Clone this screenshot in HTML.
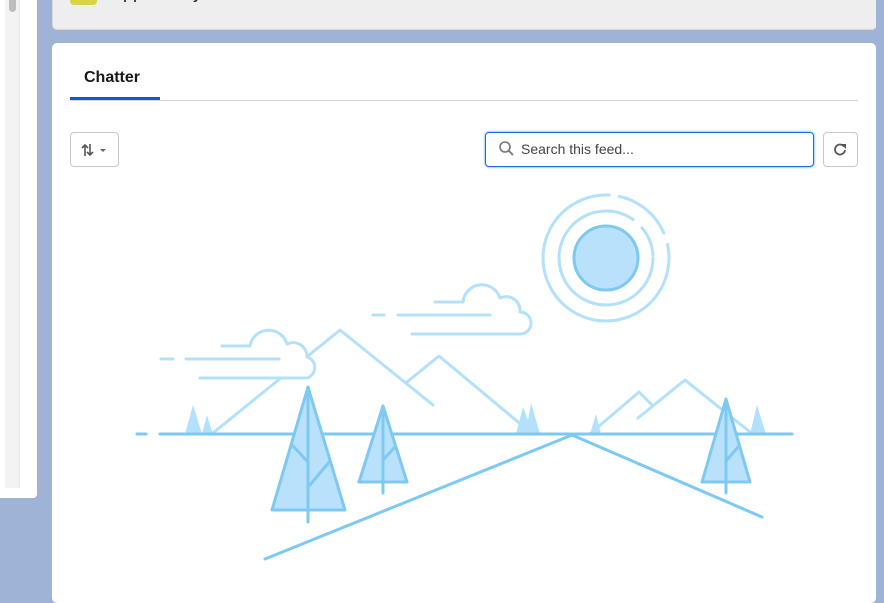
<!DOCTYPE html>
<html><head><meta charset="utf-8"><style>
body{margin:0;width:884px;height:586px;overflow:hidden;background:#9fb3d6;font-family:"Liberation Sans",sans-serif;position:relative}
.abs{position:absolute}
</style></head><body>
<div class="abs" style="left:0;top:0;width:37px;height:498px;background:#fff;border-radius:0 0 4px 0"></div>
<div class="abs" style="left:5px;top:0;width:14px;height:488px;background:#f3f3f3;border-right:1px solid #e5e5e5"></div>
<div class="abs" style="left:9px;top:0;width:7px;height:12px;background:#bdbdbd;border-radius:0 0 4px 4px"></div>
<div class="abs" style="left:52px;top:-10px;width:823px;height:38px;background:#eeeeee;border:1px solid #d8d8d8;border-radius:5px;overflow:hidden">
<div class="abs" style="left:56px;top:-9px;font-size:18px;color:#181818">Opportunity Juliet</div></div>
<div class="abs" style="left:70px;top:-10px;width:27px;height:15px;background:#d8d44a;border-radius:4px"></div>
<div class="abs" style="left:52px;top:43px;width:824px;height:560px;background:#fff;border-radius:5px"></div>
<div class="abs" style="left:876px;top:0;width:8px;height:586px;background:#9fb3d6"></div>
<div class="abs" style="left:84px;top:69px;font-weight:bold;font-size:16px;color:#181818">Chatter</div>
<div class="abs" style="left:70px;top:100px;width:788px;height:1px;background:#d4d4d4"></div>
<div class="abs" style="left:70px;top:97px;width:90px;height:3px;background:#0b5cc8"></div>
<div class="abs" style="left:70px;top:132px;width:47px;height:33px;border:1px solid #c9c9c9;border-radius:4px"></div>
<svg class="abs" style="left:80px;top:142px" width="30" height="16"><path d="M5 14V3M2 6l3-3 3 3M10 2v11M7 10l3 3 3-3" stroke="#555" stroke-width="1.6" fill="none"/><path d="M20 7h6l-3 3z" fill="#666"/></svg>
<div class="abs" style="left:485px;top:132px;width:327px;height:33px;border:1px solid #1b6fd9;border-radius:4px;box-shadow:0 0 2px #1b96ff"></div>
<svg class="abs" style="left:498px;top:140px" width="18" height="18"><circle cx="7" cy="7" r="5" stroke="#777" stroke-width="1.6" fill="none"/><path d="M10.5 10.5l4.5 4.5" stroke="#777" stroke-width="1.8"/></svg>
<div class="abs" style="left:521px;top:141px;font-size:14px;color:#444">Search this feed...</div>
<div class="abs" style="left:823px;top:132px;width:33px;height:33px;border:1px solid #c9c9c9;border-radius:4px"></div>
<svg class="abs" style="left:832px;top:141px" width="16" height="16"><path d="M12 5.5A5 5 0 1 0 13 9" stroke="#555" stroke-width="1.8" fill="none"/><path d="M9 3h5v5z" fill="#555"/></svg>
<svg class="abs" style="left:0;top:0" width="884" height="586" fill="none" stroke-linecap="round" stroke-linejoin="round">
<g stroke="#b3e0fd" stroke-width="3">
<circle cx="606" cy="258" r="47" stroke-dasharray="250 12 30 8"/>
<circle cx="606" cy="258" r="63" stroke-dasharray="300 10 60 12"/>
<path d="M213 433L340 330L433 405M407 382L439 356L530 432"/>
<path d="M591 433L639 392L652 405M638 418L685 380L750 432"/>
<path d="M222 346h28a19 19 0 0 1 37 -2a14 14 0 0 1 20 13a11 11 0 0 1 0 21H200" fill="#fff"/>
<path d="M161 359h12M186 359h93"/>
<path d="M435 302h28a19 19 0 0 1 37 -4a14 14 0 0 1 20 14a11 11 0 0 1 0 22H412" fill="#fff"/>
<path d="M373 315h11M398 315h92"/>
</g>
<g fill="#b3e0fd"><path d="M185 434L193 405L202 434zM202 434L207 415L213 434zM516 434L523 407L528 420L531 403L540 434zM590 434L596 414L601 434zM750 434L757 405L766 434z"/></g>
<g stroke="#7dc9f4" stroke-width="3">
<path d="M137 434h9M160 434h632"/>
<path d="M265 559L572 435L762 517"/>
<path d="M308 387L272 510H345Z" fill="#b9e1fc"/><path d="M308 387V522M292 445L308 462M330 461L310 485"/>
<path d="M383 406L359 482H407Z" fill="#b9e1fc"/><path d="M383 406V493M395 447L383 460"/>
<path d="M726 399L702 482H750Z" fill="#b9e1fc"/><path d="M726 399V493M739 446L726 461"/>
<circle cx="606" cy="258" r="32" fill="#b9e1fc"/>
</g>
</svg>
</body></html>
